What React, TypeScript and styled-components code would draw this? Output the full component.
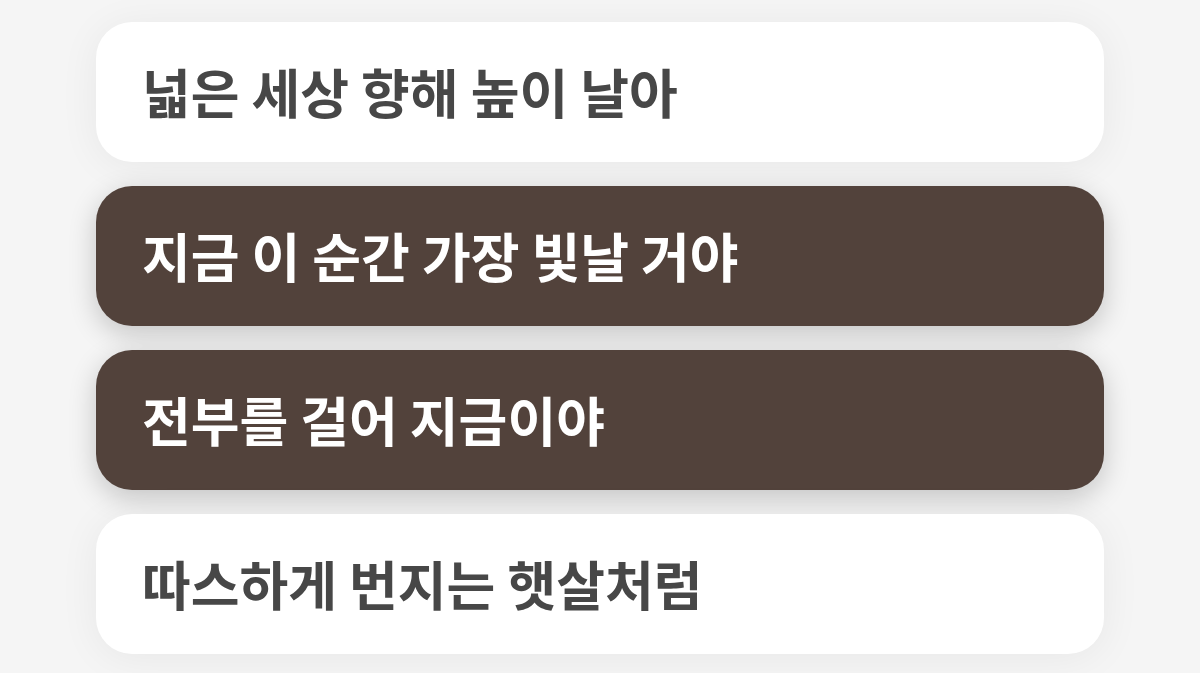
import React from "react";
import styled, { createGlobalStyle } from "styled-components";

const GlobalStyle = createGlobalStyle`
  html, body {
    margin: 0;
    padding: 0;
    background: #f5f5f5;
  }
  body {
    font-family: "Noto Sans CJK KR", "Noto Sans", sans-serif;
  }
`;

const lyrics = [
  { text: "넓은 세상 향해 높이 날아", active: false },
  { text: "지금 이 순간 가장 빛날 거야", active: true },
  { text: "전부를 걸어 지금이야", active: true },
  { text: "따스하게 번지는 햇살처럼", active: false },
];

const Page = styled.main`
  width: 1200px;
  height: 673px;
  overflow: hidden;
  box-sizing: border-box;
  padding: 22px 96px 0;
  display: flex;
  flex-direction: column;
  gap: 24px;
  background: #f5f5f5;
`;

const Line = styled.div<{ $active: boolean }>`
  height: 140px;
  flex-shrink: 0;
  box-sizing: border-box;
  padding: 0 46px 2px;
  display: flex;
  align-items: center;
  border-radius: 36px;
  background: ${(p) => (p.$active ? "#52423b" : "#ffffff")};
  color: ${(p) => (p.$active ? "#ffffff" : "#474747")};
  box-shadow: ${(p) =>
    p.$active
      ? "0 8px 28px rgba(0, 0, 0, 0.2)"
      : "0 4px 40px rgba(0, 0, 0, 0.06)"};
  font-size: 53px;
  font-weight: 700;
  white-space: nowrap;
`;

export default function App() {
  return (
    <>
      <GlobalStyle />
      <Page>
        {lyrics.map((l) => (
          <Line key={l.text} $active={l.active}>
            {l.text}
          </Line>
        ))}
      </Page>
    </>
  );
}
